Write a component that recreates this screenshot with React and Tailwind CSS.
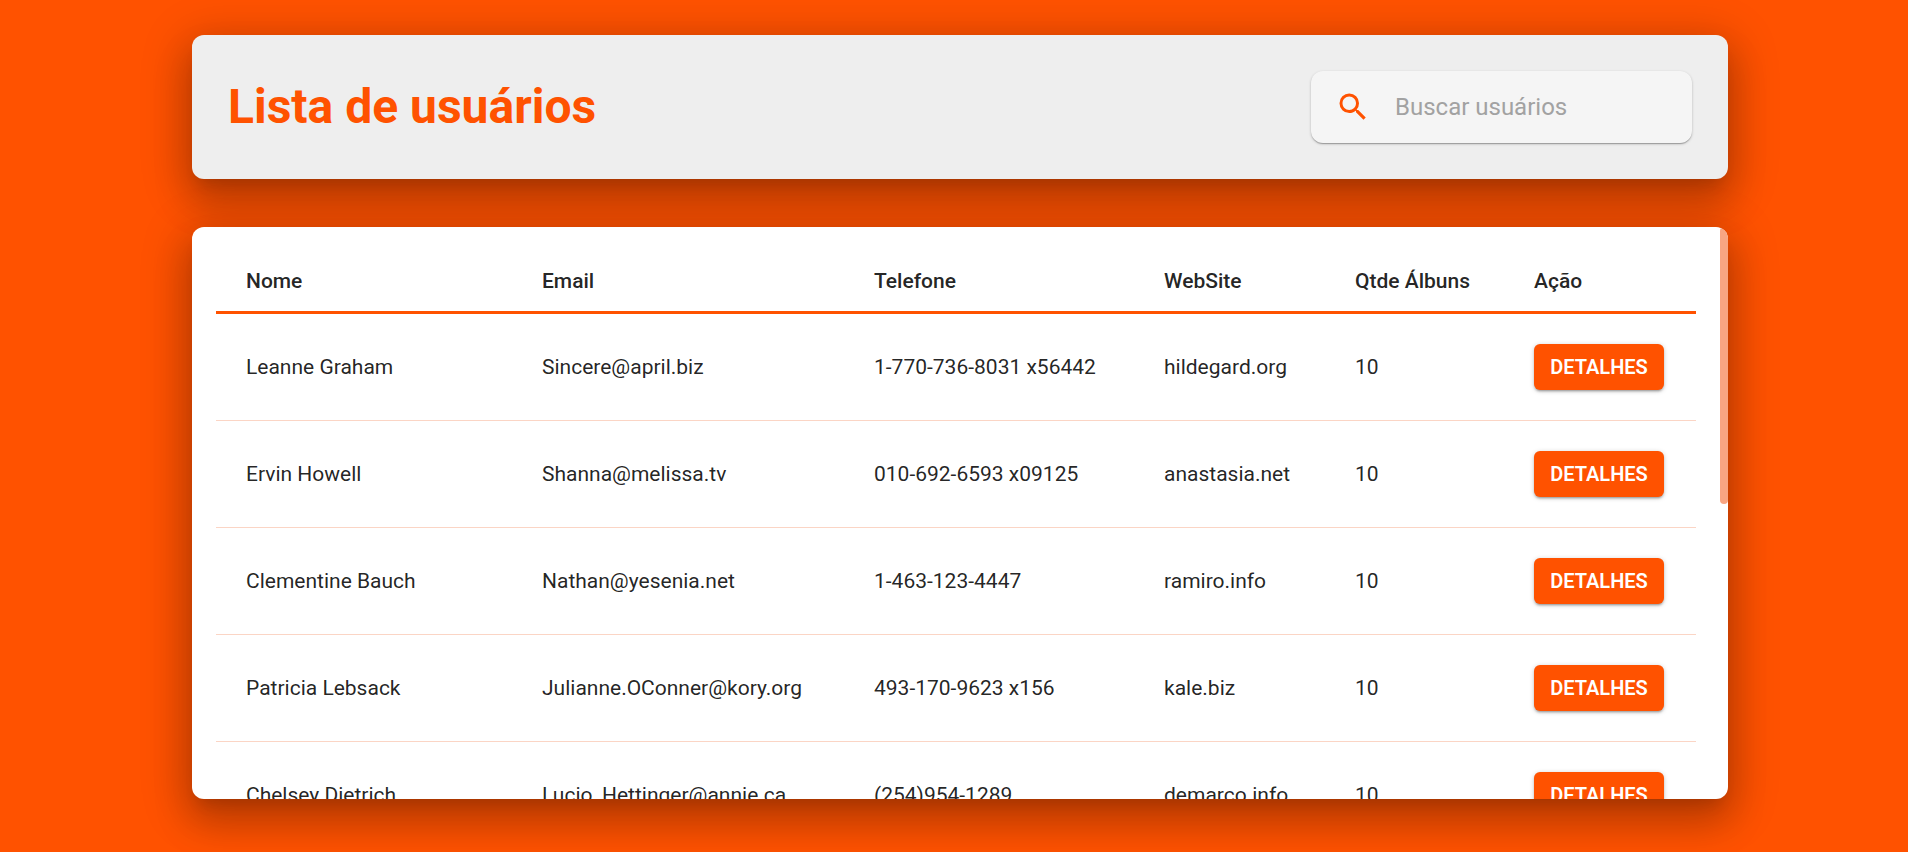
import { useEffect, useRef, useState } from "react";
import { MdSearch } from "react-icons/md";

const columns = [
  { label: "Nome", width: "w-[296px]" },
  { label: "Email", width: "w-[332px]" },
  { label: "Telefone", width: "w-[290px]" },
  { label: "WebSite", width: "w-[191px]" },
  { label: "Qtde Álbuns", width: "w-[179px]" },
  { label: "Ação", width: "w-[192px]" },
];

const users = [
  ["Leanne Graham", "Sincere@april.biz", "1-770-736-8031 x56442", "hildegard.org"],
  ["Ervin Howell", "Shanna@melissa.tv", "010-692-6593 x09125", "anastasia.net"],
  ["Clementine Bauch", "Nathan@yesenia.net", "1-463-123-4447", "ramiro.info"],
  ["Patricia Lebsack", "Julianne.OConner@kory.org", "493-170-9623 x156", "kale.biz"],
  ["Chelsey Dietrich", "Lucio_Hettinger@annie.ca", "(254)954-1289", "demarco.info"],
  ["Mrs. Dennis Schulist", "Karley_Dach@jasper.info", "1-477-935-8478 x6430", "ola.org"],
  ["Kurtis Weissnat", "Telly.Hoeger@billy.biz", "210.067.6132", "elvis.io"],
  ["Nicholas Runolfsdottir V", "Sherwood@rosamond.me", "586.493.6943 x140", "jacynthe.com"],
  ["Glenna Reichert", "Chaim_McDermott@dana.io", "(775)976-6794 x41206", "conrad.com"],
  ["Clementina DuBuque", "Rey.Padberg@karina.biz", "024-648-3804", "ambrose.net"],
];

const cardShadow =
  "shadow-[0px_9px_46px_8px_rgba(0,0,0,0.2),0px_24px_38px_3px_rgba(0,0,0,0.14),0px_11px_15px_-7px_rgba(0,0,0,0.12)]";

const cell = "border-b border-[#fbd5c5] pl-[30px]";

function SearchBox() {
  return (
    <label className="flex h-[72px] w-[381px] items-center gap-6 rounded-xl bg-[#f5f5f5] px-6 shadow-[0px_1px_3px_0px_rgba(0,0,0,0.2),0px_1px_1px_0px_rgba(0,0,0,0.14),0px_2px_1px_-1px_rgba(0,0,0,0.12)]">
      <MdSearch className="size-9 shrink-0 text-[#ff5200]" aria-hidden="true" />
      <input
        type="text"
        aria-label="Buscar usuários"
        placeholder="Buscar usuários"
        className="w-full min-w-0 bg-transparent text-2xl leading-8 text-black/87 outline-none placeholder:text-[#a2a2a2]"
      />
    </label>
  );
}

function UserTable() {
  return (
    <table className="w-full table-fixed border-separate border-spacing-0 text-left text-[21px] leading-7 text-black/87">
      <thead>
        <tr className="h-[63px]">
          {columns.map((column) => (
            <th
              key={column.label}
              scope="col"
              className={`${column.width} border-b-3 border-[#ff5200] pl-[30px] font-medium`}
            >
              {column.label}
            </th>
          ))}
        </tr>
      </thead>
      <tbody>
        {users.map(([name, email, phone, site]) => (
          <tr key={email} className="h-[107px]">
            <td className={cell}>{name}</td>
            <td className={cell}>{email}</td>
            <td className={cell}>{phone}</td>
            <td className={cell}>{site}</td>
            <td className={cell}>10</td>
            <td className={cell}>
              <button
                type="button"
                className="flex h-[46px] w-[130px] items-center justify-center rounded-md bg-[#ff5200] text-xl font-semibold text-white uppercase shadow-[0px_1px_5px_0px_rgba(0,0,0,0.2),0px_2px_2px_0px_rgba(0,0,0,0.14),0px_3px_1px_-2px_rgba(0,0,0,0.12)]"
              >
                Detalhes
              </button>
            </td>
          </tr>
        ))}
      </tbody>
    </table>
  );
}

function ScrollPanel({ children }) {
  const viewport = useRef(null);
  const [thumb, setThumb] = useState({ size: 0, offset: 0 });

  const measure = () => {
    const { clientHeight, scrollHeight, scrollTop } = viewport.current;
    setThumb({
      size: (clientHeight * clientHeight) / scrollHeight,
      offset: (scrollTop * clientHeight) / scrollHeight,
    });
  };

  useEffect(() => {
    measure();
    window.addEventListener("resize", measure);
    return () => window.removeEventListener("resize", measure);
  }, []);

  return (
    <div className="flex h-full">
      <div
        ref={viewport}
        onScroll={measure}
        className="h-full flex-1 overflow-y-auto p-6 [scrollbar-width:none]"
      >
        {children}
      </div>
      <div className="w-2 shrink-0" aria-hidden="true">
        <div
          className="rounded bg-[#f8a582]"
          style={{ height: thumb.size, transform: `translateY(${thumb.offset}px)` }}
        />
      </div>
    </div>
  );
}

export default function App() {
  return (
    <div className="flex h-screen flex-col gap-12 overflow-hidden bg-[#ff5200] pt-[35px] pr-[180px] pb-[53px] pl-48 font-[Roboto,sans-serif]">
      <header className={`flex shrink-0 items-center justify-between rounded-xl bg-[#eee] p-9 ${cardShadow}`}>
        <h1 className="text-5xl font-bold text-[#ff5200]">Lista de usuários</h1>
        <SearchBox />
      </header>
      <main className={`min-h-0 flex-1 overflow-hidden rounded-xl bg-white ${cardShadow}`}>
        <ScrollPanel>
          <UserTable />
        </ScrollPanel>
      </main>
    </div>
  );
}
